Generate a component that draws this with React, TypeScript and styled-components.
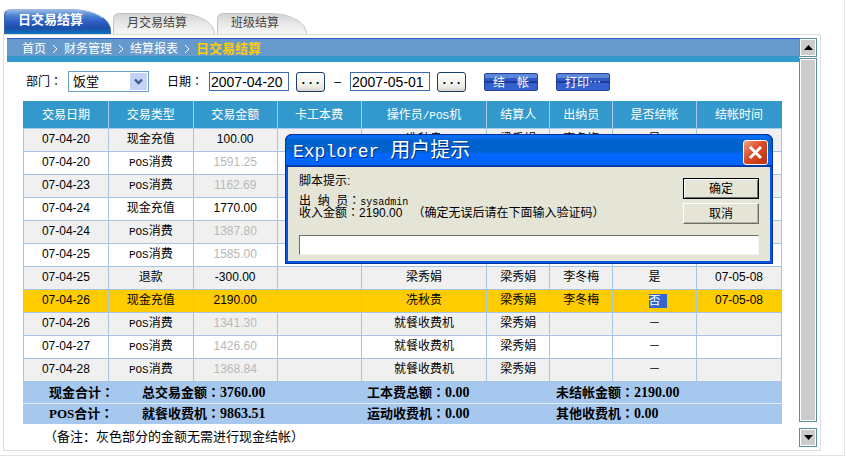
import React, { useState } from "react";
import styled, { createGlobalStyle, css } from "styled-components";

const GlobalStyle = createGlobalStyle`
  *, *::before, *::after { box-sizing: border-box; }
  body {
    margin: 0;
    background: #fff;
    color: #000;
    font: 12px/16px "Liberation Sans", "Noto Sans CJK SC", sans-serif;
  }
  button, input, select { font: inherit; color: inherit; margin: 0; }
`;

const Page = styled.div`
  position: relative;
  margin-right: 1px;
  padding: 9px 23px 4px 3px;
  border-right: 1px solid #e2e2e8;
  border-bottom: 1px solid #e2e2e2;
`;

const TabBar = styled.nav`
  display: flex;
  align-items: flex-end;
  gap: 2px;
  height: 25px;
  padding-left: 1px;
`;

const Tab = styled.button<{ $active?: boolean; $wide?: boolean }>`
  width: ${(p) => (p.$active ? 107 : p.$wide ? 102 : 90)}px;
  height: 21px;
  padding: 0 0 3px 13px;
  border: 1px solid #c4c4c4;
  border-bottom: 0;
  border-radius: 6px 38px 0 0 / 6px 22px 0 0;
  background: linear-gradient(#d4d4d4, #ececec 60%, #f6f6f6);
  color: #444;
  text-align: left;
  white-space: nowrap;
  ${(p) =>
    p.$active &&
    css`
      height: 25px;
      padding-bottom: 4px;
      border: 1px solid #3a62a8;
      border-top-color: #9db8dc;
      border-bottom: 0;
      background: linear-gradient(#94b8e4, #4a80d0 25%, #2f5cc8 50%, #1c50a8 75%, #0a74bc);
      color: #fff;
      font-size: 13px;
      font-weight: bold;
    `}
`;

const Panel = styled.main`
  display: flex;
  padding: 3px;
  border: 1px solid #dcdce0;
`;

const Content = styled.div`
  flex: 1;
  min-width: 0;
`;

const Crumbs = styled.nav`
  display: flex;
  align-items: center;
  gap: 6px;
  height: 24px;
  padding: 0 15px 3px;
  border-top: 1px solid #3355cc;
  background: linear-gradient(#6699cc 17px, #3399cc 17px);
  color: #fff;
`;

const Crumb = styled.a`
  color: #fff;
  text-decoration: none;
`;

const CurrentCrumb = styled.span`
  color: #ffcc00;
  font-size: 13px;
  font-weight: bold;
`;

const Toolbar = styled.form`
  display: flex;
  align-items: center;
  height: 39px;
  padding-left: 19px;
`;

const FieldLabel = styled.label`
  width: 42px;
  white-space: nowrap;
`;

const SelectBox = styled.div`
  display: grid;
  width: 81px;
  margin-right: 18px;
  > * { grid-area: 1 / 1; }
`;

const DepartmentSelect = styled.select`
  appearance: none;
  width: 100%;
  height: 21px;
  padding: 0 4px;
  border: 1px solid #6c9cc8;
  border-radius: 0;
  background: #fff;
  font-size: 13px;
`;

const SelectArrow = styled.svg`
  justify-self: end;
  align-self: center;
  margin-right: 2px;
  pointer-events: none;
`;

const DateInput = styled.input`
  width: 80px;
  height: 19px;
  padding: 0 1px;
  border: 1px solid #3f6bb5;
  font-size: 14px;
`;

const PickButton = styled.button`
  width: 29px;
  height: 20px;
  margin-left: 7px;
  padding: 0 0 2px;
  border: 1px solid #183c6c;
  border-radius: 3px;
  background: linear-gradient(#fff, #f0f0ea 70%, #d8d4ca);
  font: bold 12px/14px "Liberation Mono", monospace;
`;

const RangeDash = styled.span`
  width: 25px;
  text-align: center;
`;

const ActionButton = styled.button`
  width: 54px;
  height: 18px;
  margin-left: 18px;
  padding: 0;
  border: 1px solid #2a3f98;
  border-radius: 2px;
  background: linear-gradient(#5c88d8 4px, #2f5ac4 4px, #2f5ac4 7px, #1c3a9c 7px, #1c3a9c 9px, #3460d0 9px);
  color: #fff;
  font-family: "Noto Sans CJK SC", sans-serif;
  line-height: 16px;
  white-space: pre;
`;

const Report = styled.div`
  margin: 0 17px 0 16px;
`;

const Ledger = styled.table`
  width: 100%;
  border-collapse: collapse;
  table-layout: fixed;
`;

const Column = styled.col<{ $share: number }>`
  width: ${(p) => p.$share}%;
`;

const HeadCell = styled.th`
  height: 27px;
  padding: 0;
  border: 1px solid #a6caf0;
  border-top-color: #3399cc;
  background: #3399cc;
  color: #fff;
  font-weight: normal;
  &:first-child { border-left-color: #3399cc; }
  &:last-child { border-right-color: #3399cc; }
`;

const Row = styled.tr<{ $selected: boolean }>`
  background: ${(p) => (p.$selected ? "#ffcc00" : "#fff")};
  &:nth-child(odd) { background: #f0f0f0; }
`;

const Cell = styled.td<{ $muted?: boolean }>`
  height: 23px;
  padding: 0 0 2px;
  border: 1px solid #a6c4e4;
  color: ${(p) => (p.$muted ? "#b8b8b8" : "inherit")};
  line-height: 16px;
  text-align: center;
`;

const Latin = styled.span<{ $size?: number }>`
  font-family: "Liberation Mono", monospace;
  font-size: ${(p) => p.$size ?? 11}px;
  line-height: 1px;
`;

const Colon = styled.span`
  font-family: "Noto Sans CJK TC", sans-serif;
  line-height: 1px;
`;

const Marked = styled.mark`
  display: inline-block;
  height: 14px;
  background: #3366cc;
  box-shadow: 6px 0 #3366cc;
  color: #fff;
  line-height: 14px;
  vertical-align: middle;
`;

const Totals = styled.dl`
  display: grid;
  grid-template-columns: 95px 225px 189px 1fr;
  align-items: center;
  height: 21px;
  margin: 0;
  padding-left: 24px;
  background: #a6c8ee;
  font: bold 13px/20px "Liberation Serif", "Noto Sans CJK SC", serif;
  & + & { border-top: 1px solid #e0f0fa; }
`;

const TotalName = styled.dt`
  padding-left: 2px;
`;

const TotalItem = styled.dd`
  margin: 0;
`;

const Amount = styled.span`
  font-size: 14px;
`;

const Note = styled.p`
  margin: 3px 0 0;
  padding-left: 21px;
  font-size: 13px;
  line-height: 20px;
`;

const ScrollBar = styled.div`
  display: flex;
  flex-direction: column;
  width: 18px;
  gap: 1px;
`;

const ScrollButton = styled.button`
  display: grid;
  place-items: center;
  height: 19px;
  padding: 0;
  border: 1px solid #5c8f96;
  outline: 1px solid #fff;
  outline-offset: -2px;
  background: #ccc;
`;

const ScrollThumb = styled.div`
  flex: 1;
  margin-bottom: 5px;
  border: 1px solid #5c8f96;
  background: #ccc;
  box-shadow: inset 0 0 0 1px #fff;
`;

const Dialog = styled.section`
  position: absolute;
  top: 134px;
  left: 285px;
  width: 488px;
  border: 3px solid #0055e5;
  border-top: 0;
  border-radius: 7px 7px 0 0;
  background: #e5e5d7;
  outline: 1px solid #0831a0;
  outline-offset: -1px;
`;

const TitleBar = styled.header`
  display: flex;
  align-items: center;
  justify-content: space-between;
  height: 33px;
  margin: 0 -3px;
  padding: 4px 4px 0 7px;
  border: 1px solid #0038a8;
  border-bottom-width: 2px;
  border-radius: 7px 7px 0 0;
  background: linear-gradient(#0a6cf0 3px, #0062cc 5px, #0062cc 17px, #0066ff 19px);
  color: #fff;
`;

const DialogTitle = styled.h1`
  margin: 0;
  font: 20px/22px "Liberation Mono", "Noto Sans CJK SC", monospace;
  text-shadow: 1px 1px 0 #002a80;
`;

const CloseButton = styled.button`
  display: grid;
  place-items: center;
  width: 25px;
  height: 25px;
  padding: 0;
  border: 1px solid #fff;
  border-radius: 3px;
  background: linear-gradient(135deg, #f0a088, #dc4a26 45%, #bc3010);
`;

const Prompt = styled.form`
  display: grid;
  grid-template-columns: 1fr 76px;
  padding: 6px 11px 6px;
`;

const Message = styled.label`
  white-space: pre;
  line-height: 12px;
`;

const MessageTitle = styled.span`
  display: block;
  margin-bottom: 6px;
  line-height: 16px;
`;

const DialogButtons = styled.div`
  display: grid;
  gap: 4px;
  align-content: start;
  padding-top: 5px;
`;

const DialogButton = styled.button<{ $primary?: boolean }>`
  height: 21px;
  padding: 0;
  border: 1px solid;
  border-color: ${(p) => (p.$primary ? "#000" : "#fff #6e6e64 #6e6e64 #fff")};
  border-radius: 0;
  background: #e5e5d7;
  box-shadow: ${(p) => (p.$primary ? "inset 1px 1px #fff, inset -1px -1px #6e6e64" : "inset -1px -1px #b4b4a4")};
  line-height: 16px;
`;

const CodeInput = styled.input`
  grid-column: 1 / -1;
  width: 100%;
  height: 20px;
  margin-top: 11px;
  border: 1px solid;
  border-color: #6e6e64 #f4f4ec #f4f4ec #6e6e64;
  background: #fff;
`;

type Entry = {
  date: string;
  type: string;
  amount: string;
  operator?: string;
  settler?: string;
  cashier?: string;
  settled?: string;
  settledOn?: string;
};

const columns: [string, number][] = [
  ["交易日期", 85],
  ["交易类型", 85],
  ["交易金额", 84],
  ["卡工本费", 84],
  ["操作员/POS机", 126],
  ["结算人", 63],
  ["出纳员", 63],
  ["是否结帐", 84],
  ["结帐时间", 85],
];
const totalShare = columns.reduce((sum, [, share]) => sum + share, 0);

const machine = { operator: "就餐收费机", settler: "梁秀娟", settled: "－" };

const entries: Entry[] = [
  { date: "07-04-20", type: "现金充值", amount: "100.00", operator: "冼秋贵", settler: "梁秀娟", cashier: "李冬梅", settled: "是" },
  { date: "07-04-20", type: "POS消费", amount: "1591.25" },
  { date: "07-04-23", type: "POS消费", amount: "1162.69" },
  { date: "07-04-24", type: "现金充值", amount: "1770.00" },
  { date: "07-04-24", type: "POS消费", amount: "1387.80" },
  { date: "07-04-25", type: "POS消费", amount: "1585.00" },
  { date: "07-04-25", type: "退款", amount: "-300.00", operator: "梁秀娟", settler: "梁秀娟", cashier: "李冬梅", settled: "是", settledOn: "07-05-08" },
  { date: "07-04-26", type: "现金充值", amount: "2190.00", operator: "冼秋贵", settler: "梁秀娟", cashier: "李冬梅", settled: "否", settledOn: "07-05-08" },
  { date: "07-04-26", type: "POS消费", amount: "1341.30", ...machine },
  { date: "07-04-27", type: "POS消费", amount: "1426.60", ...machine },
  { date: "07-04-28", type: "POS消费", amount: "1368.84", ...machine },
];

const totals = [
  { name: "现金合计", items: [["总交易金额", "3760.00"], ["工本费总额", "0.00"], ["未结帐金额", "2190.00"]] },
  { name: "POS合计", items: [["就餐收费机", "9863.51"], ["运动收费机", "0.00"], ["其他收费机", "0.00"]] },
];

function withLatin(text: string) {
  return text.split(/(\/?POS)/).map((part, i) =>
    part.endsWith("POS") ? <Latin key={i}>{part}</Latin> : part
  );
}

function PromptDialog({ onClose }: { onClose: () => void }) {
  return (
    <Dialog role="dialog" aria-labelledby="prompt-title">
      <TitleBar>
        <DialogTitle id="prompt-title"><Latin $size={18}>Explorer </Latin>用户提示</DialogTitle>
        <CloseButton type="button" aria-label="关闭" onClick={onClose}>
          <svg width="15" height="15" viewBox="0 0 15 15">
            <path d="M2 2 13 13M13 2 2 13" stroke="#fff" strokeWidth="3" />
          </svg>
        </CloseButton>
      </TitleBar>
      <Prompt onSubmit={(e) => { e.preventDefault(); onClose(); }}>
        <Message htmlFor="code">
          <MessageTitle>脚本提示:</MessageTitle>
          {"出  纳  员"}<Colon>：</Colon><Latin $size={10}>sysadmin</Latin>
          {"\n收入金额"}<Colon>：</Colon>{"2190.00   （确定无误后请在下面输入验证码）"}
        </Message>
        <DialogButtons>
          <DialogButton $primary type="submit">确定</DialogButton>
          <DialogButton type="button" onClick={onClose}>取消</DialogButton>
        </DialogButtons>
        <CodeInput id="code" type="text" />
      </Prompt>
    </Dialog>
  );
}

function Chevron() {
  return (
    <svg width="6" height="10" viewBox="0 0 6 10" aria-hidden="true">
      <path d="M1 1 5 5 1 9" fill="none" stroke="#fff" />
    </svg>
  );
}

export default function App() {
  const [open, setOpen] = useState(true);
  return (
    <>
      <GlobalStyle />
      <Page>
        <TabBar>
          <Tab $active>日交易结算</Tab>
          <Tab $wide>月交易结算</Tab>
          <Tab>班级结算</Tab>
        </TabBar>
        <Panel>
          <Content>
            <Crumbs>
              <Crumb href="#home">首页</Crumb><Chevron />
              <Crumb href="#finance">财务管理</Crumb><Chevron />
              <Crumb href="#reports">结算报表</Crumb><Chevron />
              <CurrentCrumb>日交易结算</CurrentCrumb>
            </Crumbs>
            <Toolbar onSubmit={(e) => e.preventDefault()}>
              <FieldLabel htmlFor="department">部门<Colon>：</Colon></FieldLabel>
              <SelectBox>
                <DepartmentSelect id="department"><option>饭堂</option></DepartmentSelect>
                <SelectArrow width="17" height="17" viewBox="0 0 17 17">
                  <rect width="17" height="17" rx="1" fill="#c3d2f5" />
                  <path d="M5 6.5 8.5 10 12 6.5" fill="none" stroke="#3c5a8c" strokeWidth="2.4" />
                </SelectArrow>
              </SelectBox>
              <FieldLabel htmlFor="from">日期<Colon>：</Colon></FieldLabel>
              <DateInput id="from" type="text" defaultValue="2007-04-20" />
              <PickButton type="button" aria-label="选择开始日期">...</PickButton>
              <RangeDash>–</RangeDash>
              <DateInput type="text" aria-label="结束日期" defaultValue="2007-05-01" />
              <PickButton type="button" aria-label="选择结束日期">...</PickButton>
              <ActionButton type="submit">{"结　帐"}</ActionButton>
              <ActionButton type="button">打印…</ActionButton>
            </Toolbar>
            <Report>
              <Ledger>
                <colgroup>
                  {columns.map(([name, share]) => <Column key={name} $share={(share / totalShare) * 100} />)}
                </colgroup>
                <thead>
                  <tr>{columns.map(([name]) => <HeadCell key={name} scope="col">{withLatin(name)}</HeadCell>)}</tr>
                </thead>
                <tbody>
                  {entries.map((e, i) => (
                    <Row key={i} $selected={e.settled === "否"}>
                      <Cell>{e.date}</Cell>
                      <Cell>{withLatin(e.type)}</Cell>
                      <Cell $muted={e.type.startsWith("POS")}>{e.amount}</Cell>
                      <Cell />
                      <Cell>{e.operator}</Cell>
                      <Cell>{e.settler}</Cell>
                      <Cell>{e.cashier}</Cell>
                      <Cell>{e.settled === "否" ? <Marked>否</Marked> : e.settled}</Cell>
                      <Cell>{e.settledOn}</Cell>
                    </Row>
                  ))}
                </tbody>
              </Ledger>
              {totals.map((t) => (
                <Totals key={t.name}>
                  <TotalName>{t.name}<Colon>：</Colon></TotalName>
                  {t.items.map(([label, value]) => (
                    <TotalItem key={label}>{label}<Colon>：</Colon><Amount>{value}</Amount></TotalItem>
                  ))}
                </Totals>
              ))}
              <Note>（备注：灰色部分的金额无需进行现金结帐）</Note>
            </Report>
          </Content>
          <ScrollBar>
            <ScrollButton aria-label="向上滚动">
              <svg width="9" height="5" viewBox="0 0 9 5"><path d="M0 5 4.5 0 9 5z" /></svg>
            </ScrollButton>
            <ScrollThumb />
            <ScrollButton aria-label="向下滚动">
              <svg width="9" height="5" viewBox="0 0 9 5"><path d="M0 0 4.5 5 9 0z" /></svg>
            </ScrollButton>
          </ScrollBar>
        </Panel>
        {open && <PromptDialog onClose={() => setOpen(false)} />}
      </Page>
    </>
  );
}
